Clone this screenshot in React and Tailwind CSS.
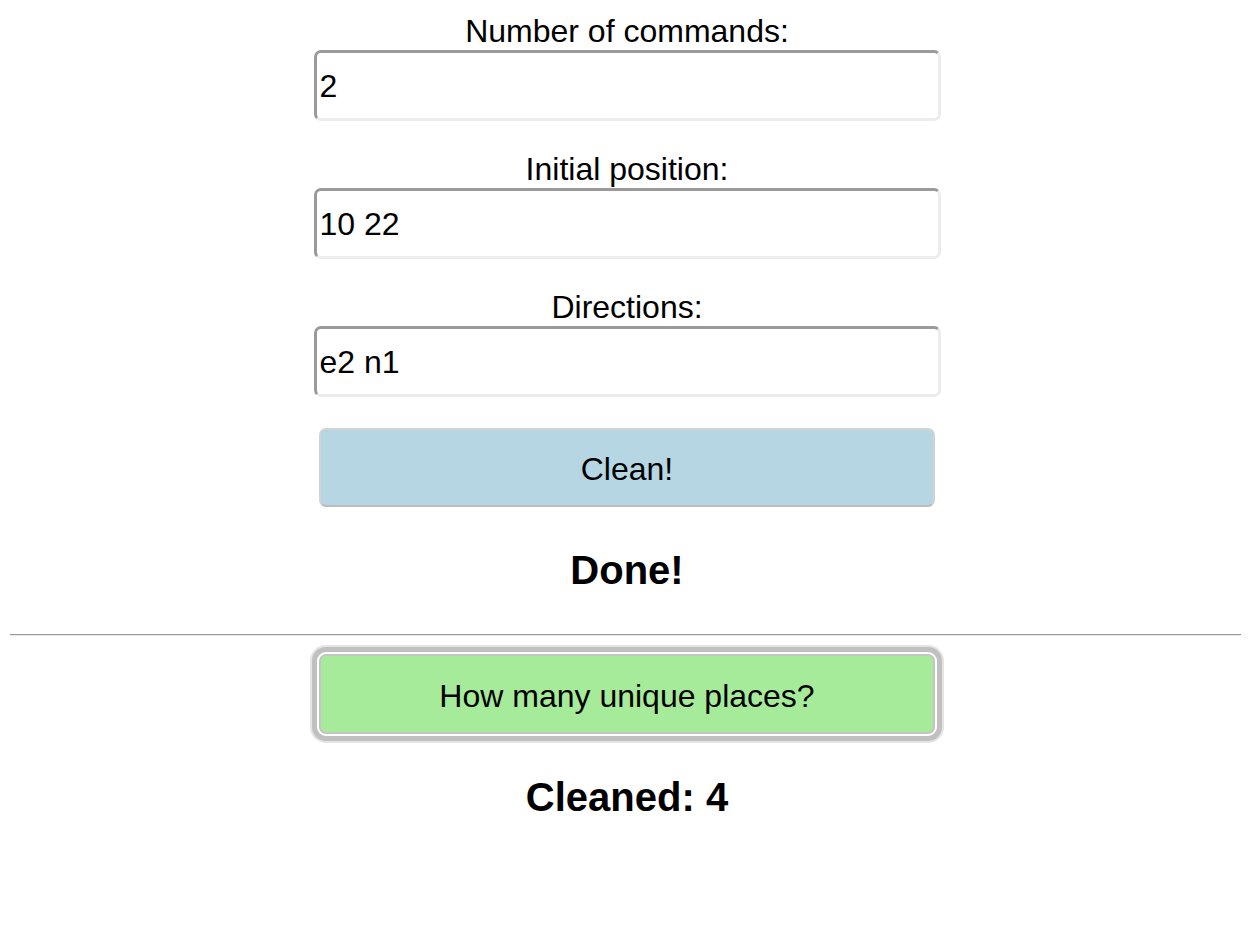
import React from "react";

function Field({ label, value, first }) {
  return (
    <div className={`w-full flex flex-col items-center ${first ? "" : "mt-[30px]"}`}>
      <div className="text-[32px] leading-[37px] text-black">{label}</div>
      <input
        readOnly
        value={value}
        className="w-full h-[71px] rounded-[7px] border-[3px] border-t-[#9a9a9a] border-l-[#9a9a9a] border-b-[#ececec] border-r-[#ececec] bg-white px-[3px] pt-[2px] text-[32px] text-black outline-none font-['Liberation_Sans',Arial,sans-serif]"
      />
    </div>
  );
}

export default function App() {
  return (
    <div className="min-h-[942px] bg-white pt-[13px] font-['Liberation_Sans',Arial,sans-serif] text-black">
      <div className="w-[627px] mx-auto flex flex-col items-center">
        <Field first label="Number of commands:" value="2" />
        <Field label="Initial position:" value="10 22" />
        <Field label="Directions:" value="e2 n1" />
        <button className="mt-[31px] w-[616px] h-[79px] rounded-[7px] border-[2px] border-[#d2d2d2] border-b-[#bdbdbd] bg-[#b5d6e2] pt-[3px] text-[32px] text-black">
          Clean!
        </button>
        <div className="mt-[40px] text-[40px] leading-[46px] font-bold">Done!</div>
      </div>
      <div className="mt-[41px] ml-[10px] mr-[13px] h-[2px] border-t-[1px] border-t-[#999] border-b-[1px] border-b-[#eaeaea]" />
      <div className="w-[627px] mx-auto flex flex-col items-center">
        <button className="mt-[18px] w-[616px] h-[80px] rounded-[7px] border-[2px] border-[#c4c4c4] bg-[#a6eb9a] pt-[3px] text-[32px] text-black shadow-[0_0_0_2px_#ffffff,0_0_0_7px_#c0c0c0,0_0_0_9px_#e4e4e4]">
          How many unique places?
        </button>
        <div className="mt-[40px] text-[40px] leading-[46px] font-bold">Cleaned: 4</div>
      </div>
    </div>
  );
}
